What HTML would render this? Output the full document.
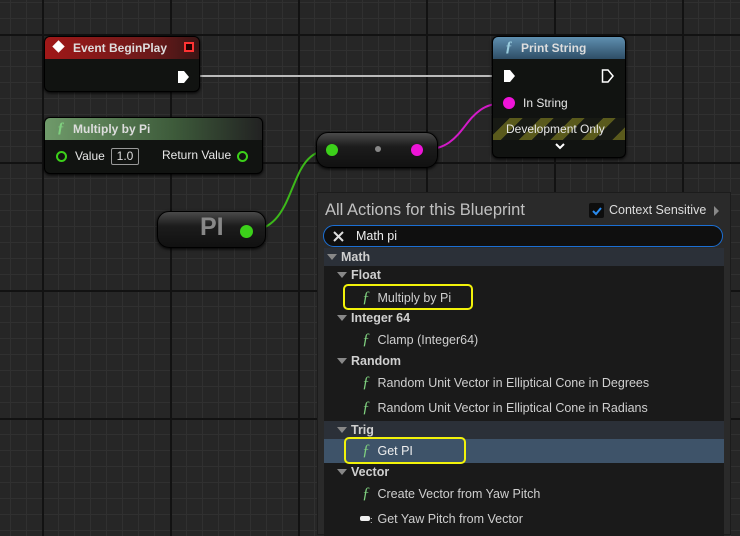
<!DOCTYPE html>
<html><head><style>
*{margin:0;padding:0;box-sizing:border-box}
body{width:740px;height:535px;overflow:hidden;position:relative;font-family:"Liberation Sans",sans-serif;
background-color:#262626;
background-image:
linear-gradient(to right,#121212 0 2px,transparent 2px),
linear-gradient(to bottom,#121212 0 2px,transparent 2px),
linear-gradient(to right,#303030 0 1px,transparent 1px),
linear-gradient(to bottom,#303030 0 1px,transparent 1px);
background-size:128px 128px,128px 128px,16px 16px,16px 16px;
background-position:42px 34px,42px 34px,10px 2px,10px 2px;}
.a{position:absolute}
.node{position:absolute;background:#111311;border-radius:6px;box-shadow:0 1px 3px #000;border:1px solid #000}
.hd{position:absolute;left:0;right:0;top:0;border-radius:5px 5px 0 0;color:#ddd;font-weight:bold;font-size:12px}
.t{color:#e8e8e8;font-size:12px;position:absolute;white-space:nowrap}
.f{font-family:"Liberation Serif",serif;font-style:italic;color:#7fd07f}
.row{position:absolute;left:0;right:0;height:24px;font-size:12.5px;color:#cfcfcf;line-height:24px;white-space:nowrap}
.row .f{display:inline-block;width:12px;font-size:16px}
.cat{font-weight:bold;color:#cfcfcf}
.tri{display:inline-block;width:0;height:0;border-left:5px solid transparent;border-right:5px solid transparent;border-top:6px solid #888;margin-right:4px;vertical-align:1px}
</style></head><body>
<svg class="a" style="left:0;top:0" width="740" height="535">
<line x1="198" y1="76" x2="500" y2="76" stroke="#bbb" stroke-width="2"/>
<path d="M250 231 C300 228 285 150 330 150" stroke="#3cb81a" stroke-width="2" fill="none"/>
<path d="M422 150 C470 150 460 103 505 103" stroke="#d31ac8" stroke-width="2" fill="none"/>
</svg>

<div class="node" style="left:44px;top:36px;width:156px;height:56px">
<div class="hd" style="height:22px;background:linear-gradient(to right,#a01818,#6a1a1a 70%,#3a1515)">
<span style="position:absolute;left:8px;top:4px;width:11px;height:11px;background:#fff;transform:rotate(45deg) scale(.8)"></span>
<span style="position:absolute;left:28px;top:4px">Event BeginPlay</span>
<span style="position:absolute;right:5px;top:5px;width:10px;height:10px;border:2px solid #f33;background:#200"></span>
</div>
<svg class="a" style="left:132px;top:33px" width="14" height="14"><path d="M1 1H7L12 7L7 13H1Z" fill="#fff"/></svg>
</div>

<div class="node" style="left:44px;top:117px;width:219px;height:57px">
<div class="hd" style="height:22px;background:linear-gradient(to right,#6f9a6a,#3d5a3a 60%,#222)">
<span class="f" style="position:absolute;left:12px;top:2px;font-size:15px">ƒ</span>
<span style="position:absolute;left:28px;top:4px">Multiply by Pi</span></div>
<span class="a" style="left:11px;top:33px;width:11px;height:11px;border:2px solid #3cd01a;border-radius:50%"></span>
<span class="t" style="left:30px;top:31px">Value</span>
<span class="a" style="left:66px;top:30px;width:28px;height:17px;border:1px solid #999;border-radius:2px;color:#ddd;font-size:12px;text-align:center;line-height:15px">1.0</span>
<span class="t" style="left:117px;top:30px">Return Value</span>
<span class="a" style="left:192px;top:33px;width:11px;height:11px;border:2px solid #3cd01a;border-radius:50%"></span>
</div>

<div class="a" style="left:316px;top:132px;width:122px;height:36px;border-radius:12px;background:linear-gradient(#4a4a4a,#1c1c1c 40%,#111);border:1px solid #000;box-shadow:0 1px 3px #000"></div>
<span class="a" style="left:326px;top:144px;width:12px;height:12px;background:#3cd01a;border-radius:50%"></span>
<span class="a" style="left:375px;top:146px;width:6px;height:6px;background:#888;border-radius:50%"></span>
<span class="a" style="left:411px;top:144px;width:12px;height:12px;background:#ee14d8;border-radius:50%"></span>

<div class="a" style="left:157px;top:211px;width:109px;height:37px;border-radius:12px;background:linear-gradient(#4a4a4a,#1c1c1c 40%,#111);border:1px solid #000;box-shadow:0 1px 3px #000"></div>
<span class="a" style="left:200px;top:213px;font-size:25px;font-weight:bold;color:#888">PI</span>
<span class="a" style="left:240px;top:225px;width:13px;height:13px;background:#3cd01a;border-radius:50%"></span>

<div class="node" style="left:492px;top:36px;width:134px;height:122px">
<div class="hd" style="height:22px;background:linear-gradient(#5f8fb0,#2e4d66)">
<span class="f" style="position:absolute;left:12px;top:2px;font-size:15px;color:#9cd">ƒ</span>
<span style="position:absolute;left:28px;top:4px">Print String</span></div>
<svg class="a" style="left:10px;top:32px" width="14" height="14"><path d="M1 1H7L12 7L7 13H1Z" fill="#fff"/></svg>
<svg class="a" style="left:108px;top:32px" width="14" height="14"><path d="M1.5 1H7L12 7L7 13H1.5Z" fill="none" stroke="#fff" stroke-width="1.5"/></svg>
<span class="a" style="left:10px;top:60px;width:12px;height:12px;background:#ee14d8;border-radius:50%"></span>
<span class="t" style="left:30px;top:59px">In String</span>
<div class="a" style="left:0;top:81px;width:132px;height:22px;background:repeating-linear-gradient(-45deg,#5a5a1c 0 9px,#181a14 9px 22px)"></div>
<span class="t" style="left:13px;top:85px">Development Only</span>
<svg class="a" style="left:61px;top:105px" width="12" height="8"><path d="M2 2L6 6L10 2" stroke="#fff" stroke-width="2" fill="none"/></svg>
</div>

<div class="a" style="left:317px;top:192px;width:414px;height:343px;background:#2a2a2a;border:1px solid #1c1c1c">
<span class="a" style="left:7px;top:8px;font-size:16.5px;color:#c0c0c0">All Actions for this Blueprint</span>
<span class="a" style="left:271px;top:10px;width:15px;height:15px;background:#0d0d0d;border-radius:2px"></span>
<svg class="a" style="left:273px;top:13px" width="12" height="10"><path d="M2 5L5 8L10 2" stroke="#2a8cf0" stroke-width="2" fill="none"/></svg>
<span class="a" style="left:291px;top:10px;font-size:12.5px;color:#ddd">Context Sensitive</span>
<span class="a" style="left:396px;top:13px;width:0;height:0;border-top:5px solid transparent;border-bottom:5px solid transparent;border-left:5px solid #888"></span>
<div class="a" style="left:5px;top:32px;width:400px;height:22px;background:#0f0f0f;border:1px solid #1b6fd4;border-radius:11px">
<svg class="a" style="left:8px;top:4px" width="13" height="13"><path d="M2 2L11 11M11 2L2 11" stroke="#ddd" stroke-width="2"/></svg>
<span class="a" style="left:32px;top:3px;font-size:12.5px;color:#eee">Math pi</span></div>
<div class="a" style="left:6px;top:55px;width:400px;height:288px;background:#1a1a1a">
<div class="row cat" style="top:0;height:18px;line-height:18px;background:#2b3038;padding-left:3px"><span class="tri"></span>Math</div>
<div class="row cat" style="top:18px;height:18px;line-height:18px;padding-left:13px"><span class="tri"></span>Float</div>
<div class="row" style="top:38px;padding-left:38px"><span class="f">ƒ</span> Multiply by Pi</div>
<div class="row cat" style="top:61px;height:18px;line-height:18px;padding-left:13px"><span class="tri"></span>Integer 64</div>
<div class="row" style="top:80px;padding-left:38px"><span class="f">ƒ</span> Clamp (Integer64)</div>
<div class="row cat" style="top:104px;height:18px;line-height:18px;padding-left:13px"><span class="tri"></span>Random</div>
<div class="row" style="top:123px;padding-left:38px"><span class="f">ƒ</span> Random Unit Vector in Elliptical Cone in Degrees</div>
<div class="row" style="top:148px;padding-left:38px"><span class="f">ƒ</span> Random Unit Vector in Elliptical Cone in Radians</div>
<div class="row cat" style="top:173px;height:18px;line-height:18px;background:#2b3038;padding-left:13px"><span class="tri"></span>Trig</div>
<div class="row" style="top:191px;background:#3e5369;color:#eee;padding-left:38px"><span class="f">ƒ</span> Get PI</div>
<div class="row cat" style="top:215px;height:18px;line-height:18px;padding-left:13px"><span class="tri"></span>Vector</div>
<div class="row" style="top:234px;padding-left:38px"><span class="f">ƒ</span> Create Vector from Yaw Pitch</div>
<div class="row" style="top:259px;padding-left:36px"><span style="display:inline-block;width:10px;height:5px;background:#eee;border-radius:2px;vertical-align:2px"></span><span style="display:inline-block;width:4px;color:#eee;font-size:9px">:</span> Get Yaw Pitch from Vector</div>
</div>
</div>
<div class="a" style="left:343px;top:284px;width:130px;height:26px;border:2.5px solid #f2f20a;border-radius:5px"></div>
<div class="a" style="left:344px;top:437px;width:122px;height:27px;border:2.5px solid #f2f20a;border-radius:5px"></div>
</body></html>
